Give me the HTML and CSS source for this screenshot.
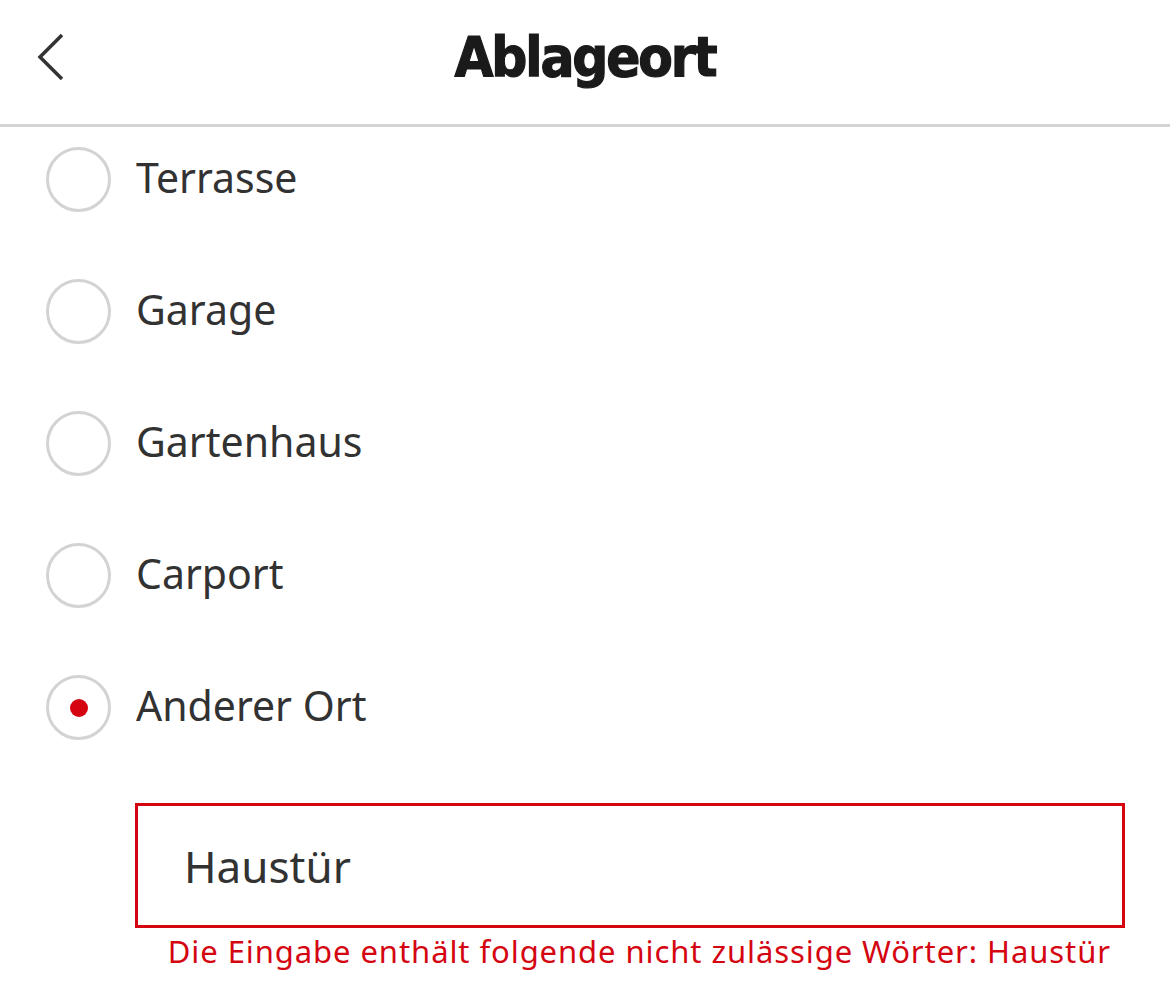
FILE: index.html
```html
<!DOCTYPE html>
<html lang="de">
<head>
<meta charset="utf-8">
<link rel="stylesheet" href="styles.css">
</head>
<body>
<header class="topbar">
  <button class="back" aria-label="Zurück">
    <svg width="30" height="48" viewBox="0 0 30 48"><path d="M26 2 L4 24 L26 46" fill="none" stroke="#333" stroke-width="3.5"/></svg>
  </button>
  <h1 class="title">Ablageort</h1>
</header>
<main class="list">
  <div class="option"><span class="radio"></span><span class="label">Terrasse</span></div>
  <div class="option"><span class="radio"></span><span class="label">Garage</span></div>
  <div class="option"><span class="radio"></span><span class="label">Gartenhaus</span></div>
  <div class="option"><span class="radio"></span><span class="label">Carport</span></div>
  <div class="option"><span class="radio checked"></span><span class="label">Anderer Ort</span></div>
  <div class="field">
    <div class="input">Haustür</div>
    <div class="error">Die Eingabe enthält folgende nicht zulässige Wörter: Haustür</div>
  </div>
</main>
</body>
</html>
```

FILE: styles.css
```css
html, body {
  margin: 0;
  padding: 0;
  background: #fff;
}
body {
  font-family: "Noto Sans", "Open Sans", sans-serif;
  color: #323232;
  width: 1170px;
  height: 1004px;
  overflow: hidden;
}
.topbar {
  position: relative;
  box-sizing: border-box;
  height: 127px;
  border-bottom: 3px solid #d3d3d3;
  display: flex;
  align-items: center;
  justify-content: center;
}
.back {
  position: absolute;
  left: 36px;
  top: 33px;
  background: none;
  border: 0;
  padding: 0;
  width: 30px;
  height: 48px;
}
.back svg { display: block; }
.title {
  margin: 0;
  margin-top: -12px;
  font-family: "DejaVu Sans Condensed", "DejaVu Sans", sans-serif;
  font-weight: 700;
  font-size: 56px;
  letter-spacing: -2.1px;
  color: #1a1a1a;
  -webkit-text-stroke: 1.2px #1a1a1a;
}
.list {
  padding-left: 46px;
  padding-top: 20px;
  display: flex;
  flex-direction: column;
  gap: 67px;
}
.option {
  display: flex;
  align-items: center;
  height: 65px;
}
.radio {
  box-sizing: border-box;
  width: 65px;
  height: 65px;
  border: 3px solid #d3d3d3;
  border-radius: 50%;
  display: flex;
  align-items: center;
  justify-content: center;
  flex: none;
}
.radio.checked::after {
  content: "";
  width: 18px;
  height: 18px;
  border-radius: 50%;
  background: #d40511;
}
.label {
  margin-left: 25px;
  font-size: 41px;
  line-height: 1;
  padding-bottom: 5px;
  color: #323232;
}
.field {
  margin-left: 89px;
  margin-top: -4px;
  width: 990px;
}
.input {
  box-sizing: border-box;
  height: 125px;
  border: 3px solid #d40511;
  padding-left: 46px;
  display: flex;
  align-items: center;
  font-size: 44px;
  color: #323232;
}
.error {
  text-align: right;
  padding-right: 14px;
  margin-top: 2px;
  font-size: 31px;
  letter-spacing: 0.92px;
  color: #d40511;
}
```
